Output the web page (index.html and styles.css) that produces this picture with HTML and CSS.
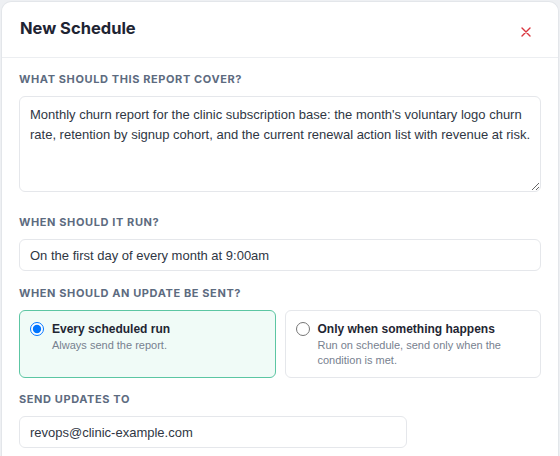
FILE: index.html
```html
<!DOCTYPE html>
<html lang="en">
<head>
    <meta charset="UTF-8">
    <meta name="viewport" content="width=device-width, initial-scale=1.0">
    <title>New Schedule</title>
    <link rel="stylesheet" href="styles.css">
</head>
<body>
    <div class="modal">
        <!-- header -->
        <div class="modal-header">
            <h2>New Schedule</h2>
            <button class="close-btn" aria-label="Close">
                <svg width="10" height="10" viewBox="0 0 10 10">
                    <path d="M1 1L9 9M9 1L1 9" stroke="#d9363e" stroke-width="1.4" stroke-linecap="round"/>
                </svg>
            </button>
        </div>

        <div class="modal-body">
            <div class="form-group tall">
                <label for="cover">What should this report cover?</label>
                <textarea id="cover" rows="4">Monthly churn report for the clinic subscription base: the month's voluntary logo churn rate, retention by signup cohort, and the current renewal action list with revenue at risk.</textarea>
            </div>

            <div class="form-group">
                <label for="when">When should it run?</label>
                <input type="text" id="when" value="On the first day of every month at 9:00am">
            </div>

            <div class="form-group choices">
                <label>When should an update be sent?</label>
                <div class="options">
                    <label class="option selected">
                        <input type="radio" name="send" checked>
                        <span class="option-text">
                            <span class="option-title">Every scheduled run</span>
                            <span class="option-desc">Always send the report.</span>
                        </span>
                    </label>
                    <label class="option">
                        <input type="radio" name="send">
                        <span class="option-text">
                            <span class="option-title">Only when something happens</span>
                            <span class="option-desc">Run on schedule, send only when the condition is met.</span>
                        </span>
                    </label>
                </div>
            </div>

            <div class="form-group">
                <label for="to">Send updates to</label>
                <input type="text" id="to" class="short" value="revops@clinic-example.com">
            </div>
        </div>
    </div>
</body>
</html>
```

FILE: styles.css
```css
body {
    font-family: "Liberation Sans", Arial, sans-serif;
    margin: 0;
    background-color: #eef0f3;
    color: #1f2937;
}

.modal {
    margin: 1px 1px 0 1px;
    background-color: #fff;
    border: 1px solid #e3e6ea;
    border-bottom: none;
    border-radius: 10px 10px 0 0;
    height: 460px;
}

/* Header */
.modal-header {
    box-sizing: border-box;
    height: 56px;
    padding: 15px 18px 0;
    display: flex;
    align-items: flex-start;
    justify-content: space-between;
    border-bottom: 1px solid #eceef1;
}
.modal-header h2 {
    margin: 0;
    font-family: Inter, sans-serif;
    font-size: 16.5px;
    line-height: 22px;
    font-weight: 700;
    color: #1e2433;
}
.close-btn {
    background: none;
    border: none;
    padding: 0;
    width: 20px;
    height: 20px;
    margin-top: 5px;
    margin-right: 4px;
    display: flex;
    align-items: center;
    justify-content: center;
    cursor: pointer;
}

/* Form */
.modal-body {
    padding: 14px 17px;
}
.form-group {
    margin-bottom: 15px;
}
.form-group.tall {
    margin-bottom: 23px;
}
.form-group.choices {
    margin-bottom: 14px;
}
.form-group > label {
    display: block;
    margin-bottom: 10px;
    font-family: Inter, sans-serif;
    font-size: 11px;
    font-weight: 700;
    letter-spacing: 0.6px;
    text-transform: uppercase;
    color: #5d6b80;
}
textarea, input[type="text"] {
    box-sizing: border-box;
    width: 100%;
    font-family: inherit;
    font-size: 13px;
    color: #2f3744;
    border: 1px solid #e5e7eb;
    border-radius: 6px;
    padding: 0 10px;
    background: #fff;
    outline: none;
}
textarea {
    display: block;
    height: 96px;
    padding: 8px 4px 8px 10px;
    line-height: 20px;
    resize: vertical;
}
input[type="text"] {
    height: 32px;
}
input.short {
    width: 388px;
}

/* Radio cards */
.options {
    display: flex;
    gap: 9px;
}
.option {
    flex: 1;
    box-sizing: border-box;
    height: 68px;
    display: flex;
    align-items: flex-start;
    gap: 8px;
    padding: 10px 10px;
    border: 1px solid #e5e7eb;
    border-radius: 6px;
    cursor: pointer;
}
.option.selected {
    border-color: #5cc6a3;
    background-color: #f0fbf7;
}
.option input {
    margin: 1px 0 0 0;
    width: 14px;
    height: 14px;
    flex: none;
}
.option-text {
    display: flex;
    flex-direction: column;
}
.option-title {
    font-size: 12px;
    font-weight: 700;
    color: #1f2633;
    line-height: 16px;
}
.option-desc {
    margin-top: 1px;
    font-size: 11px;
    color: #77818f;
    line-height: 15px;
}
```
